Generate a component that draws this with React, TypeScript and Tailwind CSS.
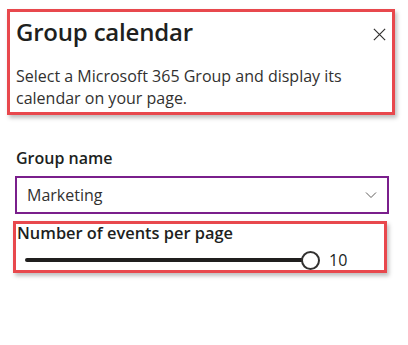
import React from 'react';

const font = { fontFamily: '"Open Sans", "Noto Sans", Arial, sans-serif' };

export default function App() {
  return (
    <div className="w-[408px] h-[345px] bg-white text-[#201f1e] relative overflow-hidden" style={font}>
      {/* header */}
      <div className="ml-[7px] mt-[9px] w-[388px] h-[106px] border-[3px] border-[#e8484d] shadow-[2px_3px_4px_rgba(0,0,0,0.25)]">
        <div className="flex items-start justify-between pl-[6px] pr-[5px] pt-[4px]">
          <h1 className="text-[24px] leading-[32px] font-semibold tracking-[-0.2px]">Group calendar</h1>
          <button className="mt-[11px] text-[#323130]">
            <svg width="15" height="15" viewBox="0 0 16 16" fill="none" stroke="currentColor" strokeWidth="1.3">
              <path d="M2 2 L14 14 M14 2 L2 14" />
            </svg>
          </button>
        </div>
        <p className="pl-[6px] pr-2 mt-[17px] text-[16px] leading-[22px] text-[#323130]">
          Select a Microsoft 365 Group and display its calendar on your page.
        </p>
      </div>

      {/* group name */}
      <div className="mt-[33px] px-[15px]">
        <label className="block pl-[1px] text-[16px] leading-[21px] font-semibold">Group name</label>
        <div className="mt-[7px] h-[38px] w-[374px] border-2 border-[#7a1f8c] flex items-center justify-between pl-[10px] pr-[10px]">
          <span className="text-[16px] text-[#323130]">Marketing</span>
          <svg width="12" height="8" viewBox="0 0 12 8" fill="none" stroke="#605e5c" strokeWidth="1">
            <path d="M1 1.5 L6 6.5 L11 1.5" />
          </svg>
        </div>
      </div>

      {/* events per page */}
      <div className="ml-[13px] mt-[7px] w-[374px] h-[52px] border-[3px] border-[#e8484d] shadow-[2px_3px_4px_rgba(0,0,0,0.25)]">
        <div className="-mt-[2px] pl-[1px] text-[16.4px] leading-[21px] font-semibold">Number of events per page</div>
        <div className="flex items-center mt-[7px] pl-[9px]">
          <div className="flex items-center">
            <div className="w-[279px] h-[4px] rounded-full bg-[#201f1e]" />
            <div className="-ml-[3px] w-[19px] h-[19px] rounded-full border-2 border-[#323130] bg-white" />
          </div>
          <span className="ml-[9px] text-[16px] leading-[20px]">10</span>
        </div>
      </div>
    </div>
  );
}
